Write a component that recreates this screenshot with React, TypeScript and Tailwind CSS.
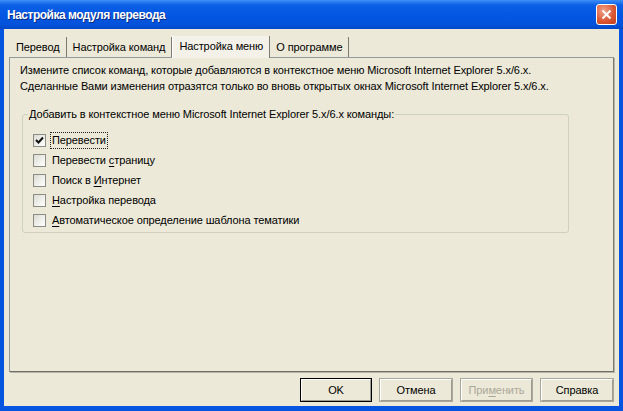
import React from "react";

const font = { fontFamily: '"Liberation Sans", Arial, sans-serif' };

const tabs = ["Перевод", "Настройка команд", "Настройка меню", "О программе"];

type Item = { pre: string; key: string; post: string; checked?: boolean; focus?: boolean };

const items: Item[] = [
  { pre: "Перевести", key: "", post: "", checked: true, focus: true },
  { pre: "Перевести ", key: "с", post: "траницу" },
  { pre: "Поиск в ", key: "И", post: "нтернет" },
  { pre: "", key: "Н", post: "астройка перевода" },
  { pre: "", key: "А", post: "втоматическое определение шаблона тематики" },
];

const CheckBox = ({ checked }: { checked?: boolean }) => (
  <div className="w-[13px] h-[13px] border border-[#8c8c84] bg-[linear-gradient(135deg,#dcdcd4,#ffffff)] flex items-center justify-center">
    {checked && (
      <svg width="9" height="9" viewBox="0 0 9 9">
        <path d="M1 4 L3.5 6.5 L8 1.5" fill="none" stroke="#111" strokeWidth="2" />
      </svg>
    )}
  </div>
);

const Button = ({
  label,
  isDefault,
  disabled,
  width,
}: {
  label: React.ReactNode;
  isDefault?: boolean;
  disabled?: boolean;
  width: string;
}) => (
  <div
    className={`${width} h-[24px] flex items-center justify-center text-[11px] bg-[#ECE9D8] border ${
      isDefault ? "border-[#000]" : "border-[#a9a79c]"
    } ${disabled ? "text-[#aca899]" : "text-black"}`}
  >
    <div className="w-full h-full flex items-center justify-center border-t border-l border-t-white border-l-white border-b border-r border-b-[#9d9b90] border-r-[#9d9b90]">
      {label}
    </div>
  </div>
);

export default function App() {
  return (
    <div
      className="w-[623px] h-[411px] flex flex-col bg-[#0655E0] overflow-hidden"
      style={font}
    >
      {/* Title bar */}
      <div className="h-[29px] flex items-center justify-between pl-[7px] pr-[6px] bg-[linear-gradient(180deg,#3D8EF5_0%,#0A5FE6_18%,#0456E2_55%,#0352DA_85%,#0047C6_100%)]">
        <span className="text-white font-bold text-[12px] tracking-[-0.5px] [text-shadow:1px_1px_0_#0a2a80]">
          Настройка модуля перевода
        </span>
        <div className="w-[21px] h-[21px] rounded-[3px] border border-white bg-[radial-gradient(circle_at_35%_30%,#f3a28a,#d9542f_60%,#c1401c)] flex items-center justify-center">
          <svg width="11" height="11" viewBox="0 0 11 11">
            <path d="M1.5 1.5 L9.5 9.5 M9.5 1.5 L1.5 9.5" stroke="#fff" strokeWidth="2" />
          </svg>
        </div>
      </div>

      {/* Body */}
      <div className="flex-1 mx-[4px] mb-[5px] bg-[#ECE9D8] flex flex-col pt-[6px] pl-[5px] pr-[5px] text-[11px] tracking-[-0.1px]">
        {/* Tabs */}
        <div className="flex items-end h-[22px] pl-[1px]">
          {tabs.map((t, i) => {
            const sel = i === 2;
            return (
              <div
                key={t}
                className={`flex items-center border-r border-r-[#7c7a70] ${
                  sel
                    ? "h-[22px] bg-[#F4F2E8] border-l border-l-white -mb-[1px] z-10 px-[6px] pb-[2px]"
                    : "h-[20px] bg-[#ECE9D8] px-[6px]"
                }`}
              >
                {t}
              </div>
            );
          })}
        </div>

        {/* Panel */}
        <div className="h-[315px] border border-[#919B9C] border-b-[#6f6e66] border-r-[#7b7a72] shadow-[1px_1px_0_#b8b6a8] flex flex-col pl-[10px] pr-[44px]">
          <p className="mt-[4px] leading-[16px] whitespace-nowrap">
            Измените список команд, которые добавляются в контекстное меню Microsoft Internet Explorer 5.x/6.x.
            <br />
            Сделанные Вами изменения отразятся только во вновь открытых окнах Microsoft Internet Explorer 5.x/6.x.
          </p>

          <fieldset className="mt-[13px] ml-[2px] h-[126px] border border-[#D0D0BF] rounded-[3px] px-[10px] pb-[6px]">
            <legend className="px-[1px] ml-[-5px] leading-[14px]">
              Добавить в контекстное меню Microsoft Internet Explorer 5.x/6.x команды:
            </legend>
            <div className="flex flex-col mt-[9px]">
              {items.map((it, i) => (
                <div key={i} className="flex items-center h-[20px] gap-[5px]">
                  <CheckBox checked={it.checked} />
                  <span
                    className={`leading-[15px] px-[1px] ${
                      it.focus ? "outline outline-1 outline-dotted outline-[#222]" : ""
                    }`}
                  >
                    {it.pre}
                    {it.key && <span className="underline underline-offset-2">{it.key}</span>}
                    {it.post}
                  </span>
                </div>
              ))}
            </div>
          </fieldset>
        </div>

        {/* Buttons */}
        <div className="flex justify-end gap-[7px] mt-[6px]">
          <Button label="OK" isDefault width="w-[72px]" />
          <Button label="Отмена" width="w-[74px]" />
          <Button
            label={
              <span>
                При<span className="underline underline-offset-2">м</span>енить
              </span>
            }
            disabled
            width="w-[73px]"
          />
          <Button label="Справка" width="w-[74px]" />
        </div>
      </div>
    </div>
  );
}
